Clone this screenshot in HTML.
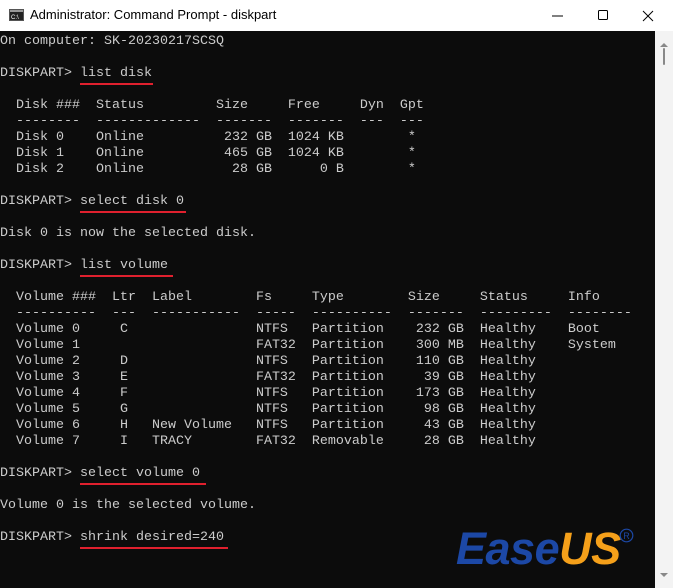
<!DOCTYPE html>
<html><head><style>
html,body{margin:0;padding:0;width:673px;height:588px;overflow:hidden;background:#fff;font-family:"Liberation Sans",sans-serif}
.title{position:absolute;left:0;top:0;width:673px;height:31px;background:#fff}
.title .t{position:absolute;left:30px;top:7px;font-size:13px;color:#000}
.con{position:absolute;left:0;top:31px;width:655px;height:557px;background:#0c0c0c}
pre{margin:0;position:absolute;left:0;top:3px;font-family:"Liberation Mono",monospace;font-size:13.33px;line-height:16px;color:#cccccc}
.sb{position:absolute;left:655px;top:31px;width:18px;height:557px;background:#f3f3f3}
.u{position:absolute;height:2px;background:#e0202e}
</style></head><body>
<div class="title">
<svg style="position:absolute;left:9px;top:9px" width="15" height="12"><rect x="0.5" y="0.5" width="14" height="11" fill="#222" stroke="#555"/><rect x="1" y="1" width="13" height="2" fill="#999"/><text x="2" y="10" font-size="6" fill="#fff" font-family="Liberation Sans">C:\</text></svg>
<div class="t">Administrator: Command Prompt - diskpart</div>
<svg style="position:absolute;left:550px;top:8px" width="110" height="16">
<line x1="2" y1="8" x2="13" y2="8" stroke="#000" stroke-width="1"/>
<rect x="48.5" y="2.5" width="9" height="9" rx="1" fill="none" stroke="#000"/>
<line x1="93" y1="3" x2="103" y2="13" stroke="#000"/><line x1="103" y1="3" x2="93" y2="13" stroke="#000"/>
</svg>
</div>
<div class="con">
<pre>On computer: SK-20230217SCSQ

DISKPART&gt; list disk

  Disk ###  Status         Size     Free     Dyn  Gpt
  --------  -------------  -------  -------  ---  ---
  Disk 0    Online          232 GB  1024 KB        *
  Disk 1    Online          465 GB  1024 KB        *
  Disk 2    Online           28 GB      0 B        *

DISKPART&gt; select disk 0

Disk 0 is now the selected disk.

DISKPART&gt; list volume

  Volume ###  Ltr  Label        Fs     Type        Size     Status     Info
  ----------  ---  -----------  -----  ----------  -------  ---------  --------
  Volume 0     C                NTFS   Partition    232 GB  Healthy    Boot
  Volume 1                      FAT32  Partition    300 MB  Healthy    System
  Volume 2     D                NTFS   Partition    110 GB  Healthy
  Volume 3     E                FAT32  Partition     39 GB  Healthy
  Volume 4     F                NTFS   Partition    173 GB  Healthy
  Volume 5     G                NTFS   Partition     98 GB  Healthy
  Volume 6     H   New Volume   NTFS   Partition     43 GB  Healthy
  Volume 7     I   TRACY        FAT32  Removable     28 GB  Healthy

DISKPART&gt; select volume 0

Volume 0 is the selected volume.

DISKPART&gt; shrink desired=240</pre>
<div style="position:absolute;left:456px;top:495px;font-family:'Liberation Sans',sans-serif;font-weight:bold;font-style:italic;font-size:45px;letter-spacing:-0.5px;line-height:45px"><span style="color:#1c48a6">Ease</span><span style="color:#f5a01a">US</span></div>
<svg style="position:absolute;left:619px;top:497px" width="15" height="15"><circle cx="7.5" cy="7.5" r="6.3" fill="none" stroke="#1c48a6" stroke-width="1.2"/><text x="7.5" y="11" text-anchor="middle" font-size="9" fill="#1c48a6" font-family="Liberation Sans">R</text></svg>
</div>
<div class="u" style="left:80px;top:83px;width:73px"></div>
<div class="u" style="left:80px;top:211px;width:106px"></div>
<div class="u" style="left:80px;top:275px;width:93px"></div>
<div class="u" style="left:80px;top:483px;width:126px"></div>
<div class="u" style="left:80px;top:547px;width:148px"></div>
<div class="sb">
<svg style="position:absolute;left:4px;top:11px" width="10" height="6"><path d="M1 5 L5 1 L9 5Z" fill="#888"/></svg>
<div style="position:absolute;left:8px;top:17px;width:2px;height:17px;background:#888;border-radius:1px"></div>
<svg style="position:absolute;left:4px;top:541px" width="10" height="6"><path d="M1 1 L5 5 L9 1Z" fill="#888"/></svg>
</div>
</body></html>
